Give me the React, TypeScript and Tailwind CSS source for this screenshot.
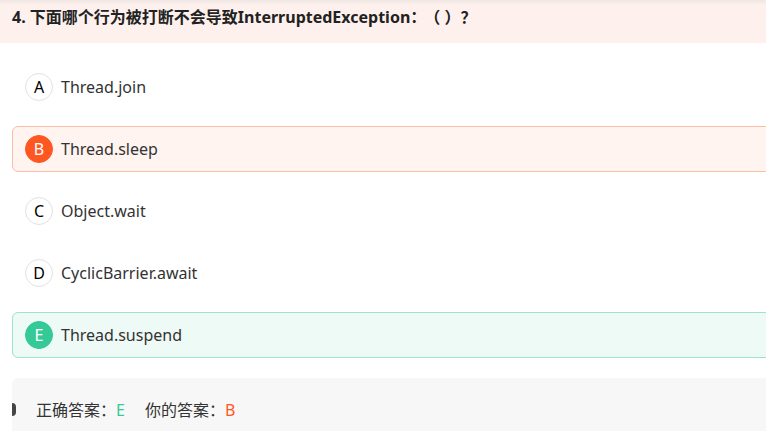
import React from "react";

type Opt = { key: string; text: string; state?: "wrong" | "right" };

const options: Opt[] = [
  { key: "A", text: "Thread.join" },
  { key: "B", text: "Thread.sleep", state: "wrong" },
  { key: "C", text: "Object.wait" },
  { key: "D", text: "CyclicBarrier.await" },
  { key: "E", text: "Thread.suspend", state: "right" },
];

const font = { fontFamily: '"Microsoft YaHei", "Noto Sans", "Noto Sans CJK SC", sans-serif' };

function Option({ o }: { o: Opt }) {
  const box =
    o.state === "wrong"
      ? "border-[#fdbda4] bg-[#fff4f0]"
      : o.state === "right"
      ? "border-[#9fe3c8] bg-[#eefaf6]"
      : "border-transparent bg-white";
  const dot =
    o.state === "wrong"
      ? "bg-[#ff5722] text-white border-[#ff5722]"
      : o.state === "right"
      ? "bg-[#35c998] text-white border-[#35c998]"
      : "bg-white text-black border-[#e2e2e2]";
  return (
    <div className={`flex items-center h-[46px] ml-3 -mr-2 pl-3 border rounded-md ${box}`}>
      <span className={`flex items-center justify-center w-[28px] h-[28px] rounded-full border text-[16px] ${dot}`}>
        {o.key}
      </span>
      <span className="ml-2 text-[16px] text-[#333]">{o.text}</span>
    </div>
  );
}

export default function App() {
  return (
    <div className="w-[766px] h-[431px] overflow-hidden bg-white" style={font}>
      <div className="h-[43px] pl-3 pt-[5px] bg-gradient-to-b from-[#eee6e3] to-[#fef1ed] to-[12%]">
        <h2 className="text-[16px] font-bold text-[#222] leading-[24px]">
          4. 下面哪个行为被打断不会导致InterruptedException：<span className="ml-[6px]">（ ）？</span>
        </h2>
      </div>
      <div className="flex flex-col gap-[16px] pt-[21px]">
        {options.map((o) => (
          <Option key={o.key} o={o} />
        ))}
      </div>
      <div className="relative mt-[20px] ml-3 h-[60px] bg-[#f7f7f7] rounded-tl-md flex items-center pl-6 pt-[4px] text-[16px] text-[#333]">
        <span className="absolute left-0 top-[25px] w-[4px] h-[13px] rounded-r-full bg-[#444]" />
        <span>正确答案：</span>
        <span className="text-[#35c998]">E</span>
        <span className="ml-5">你的答案：</span>
        <span className="text-[#ff5722]">B</span>
      </div>
    </div>
  );
}
